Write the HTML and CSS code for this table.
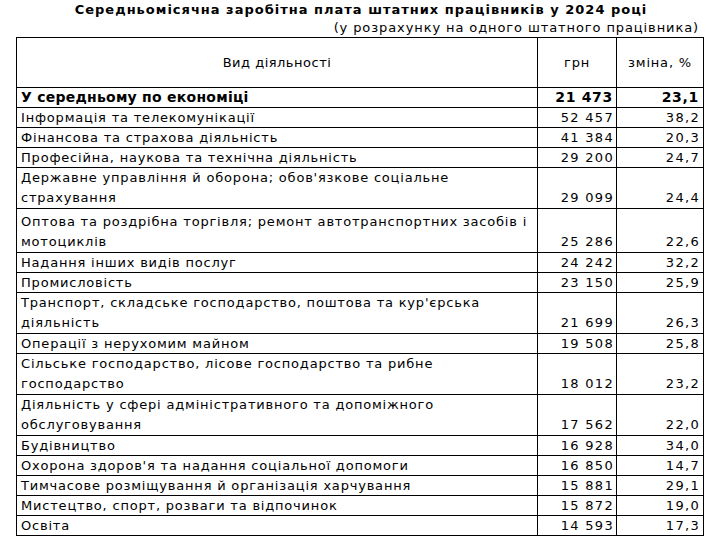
FILE: index.html
```
<!DOCTYPE html>
<html lang="uk">
<head>
<meta charset="utf-8">
<link rel="stylesheet" href="styles.css">
</head>
<body>
<div class="wrap">
  <div class="title">Середньомісячна заробітна плата штатних працівників у 2024 році</div>
  <div class="subtitle">(у розрахунку на одного штатного працівника)</div>
  <table class="data">
    <colgroup><col class="c1"><col class="c2"><col class="c3"></colgroup>
    <tr class="head"><td class="hname">Вид діяльності</td><td class="hnum">грн</td><td class="hnum">зміна, %</td></tr>
    <tr class="total"><td>У середньому по економіці</td><td class="n">21 473</td><td class="n">23,1</td></tr>
    <tr><td>Інформація та телекомунікації</td><td class="n">52 457</td><td class="n">38,2</td></tr>
    <tr><td>Фінансова та страхова діяльність</td><td class="n">41 384</td><td class="n">20,3</td></tr>
    <tr><td>Професійна, наукова та технічна діяльність</td><td class="n">29 200</td><td class="n">24,7</td></tr>
    <tr class="two"><td>Державне управління й оборона; обов'язкове соціальне<br>страхування</td><td class="n">29 099</td><td class="n">24,4</td></tr>
    <tr class="two tall"><td>Оптова та роздрібна торгівля; ремонт автотранспортних засобів і<br>мотоциклів</td><td class="n">25 286</td><td class="n">22,6</td></tr>
    <tr><td>Надання інших видів послуг</td><td class="n">24 242</td><td class="n">32,2</td></tr>
    <tr><td>Промисловість</td><td class="n">23 150</td><td class="n">25,9</td></tr>
    <tr class="two"><td>Транспорт, складське господарство, поштова та кур'єрська<br>діяльність</td><td class="n">21 699</td><td class="n">26,3</td></tr>
    <tr><td>Операції з нерухомим майном</td><td class="n">19 508</td><td class="n">25,8</td></tr>
    <tr class="two"><td>Сільське господарство, лісове господарство та рибне<br>господарство</td><td class="n">18 012</td><td class="n">23,2</td></tr>
    <tr class="two"><td>Діяльність у сфері адміністративного та допоміжного<br>обслуговування</td><td class="n">17 562</td><td class="n">22,0</td></tr>
    <tr><td>Будівництво</td><td class="n">16 928</td><td class="n">34,0</td></tr>
    <tr><td>Охорона здоров'я та надання соціальної допомоги</td><td class="n">16 850</td><td class="n">14,7</td></tr>
    <tr><td>Тимчасове розміщування й організація харчування</td><td class="n">15 881</td><td class="n">29,1</td></tr>
    <tr><td>Мистецтво, спорт, розваги та відпочинок</td><td class="n">15 872</td><td class="n">19,0</td></tr>
    <tr><td>Освіта</td><td class="n">14 593</td><td class="n">17,3</td></tr>
  </table>
</div>
</body>
</html>
```
FILE: styles.css
```
html, body {
  margin: 0;
  padding: 0;
  background: #ffffff;
}
body {
  font-family: "DejaVu Sans", Verdana, sans-serif;
  font-size: 13px;
  color: #000000;
}
.wrap {
  width: 687px;
  margin-left: 16px;
}
.title {
  font-weight: bold;
  text-align: center;
  line-height: 19px;
  height: 19px;
  letter-spacing: 1px;
  padding-left: 3px;
}
.subtitle {
  text-align: right;
  padding-right: 4px;
  line-height: 18px;
  height: 18px;
  letter-spacing: 0.9px;
}
.data {
  border-collapse: collapse;
  width: 687px;
  table-layout: fixed;
}
.c1 { width: 521px; }
.c2 { width: 79px; }
.c3 { width: 87px; }
.data td {
  border: 1px solid #000000;
  padding: 0 3px 0 4px;
  line-height: 19px;
  vertical-align: bottom;
  white-space: nowrap;
  overflow: hidden;
  letter-spacing: 0.8px;
}
.data td.n {
  text-align: right;
  padding-right: 2px;
  letter-spacing: 1.3px;
}
.data td.n:nth-child(3) {
  padding-right: 3px;
}
.head td {
  height: 49px;
  vertical-align: middle;
  text-align: center;
  padding: 0;
  letter-spacing: 0.5px;
}
.head td.hnum {
  letter-spacing: 0.8px;
}
.total td {
  font-weight: bold;
  font-size: 14px;
  letter-spacing: 0.25px;
}
.total td.n {
  letter-spacing: 0.7px;
  padding-right: 3px;
}
.total td.n:nth-child(3) {
  padding-right: 4px;
}
.two td {
  line-height: 20px;
}
.tall td {
  padding-top: 3px;
}
```
